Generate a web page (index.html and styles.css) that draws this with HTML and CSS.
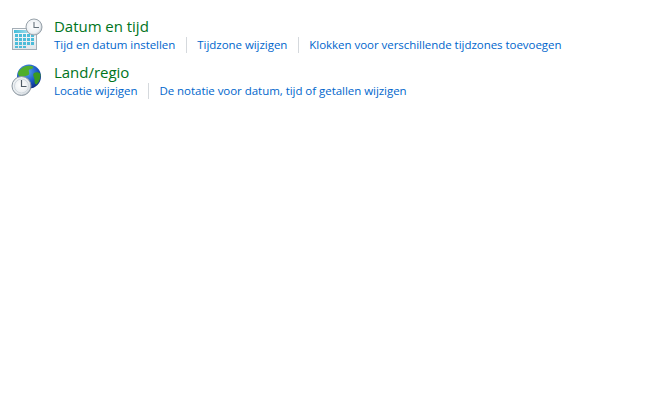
FILE: index.html
```html
<!DOCTYPE html>
<html lang="nl">
<head>
<meta charset="utf-8">
<title>Klok en land/regio</title>
<link rel="stylesheet" href="styles.css">
</head>
<body>
<main class="list">
  <section class="item">
    <svg class="icon" width="32" height="32" viewBox="0 0 32 32" aria-hidden="true">
      <defs>
        <linearGradient id="calBody" x1="0" y1="0" x2="0" y2="1"><stop offset="0" stop-color="#fafcfd"/><stop offset="1" stop-color="#dfe6ea"/></linearGradient>
        <linearGradient id="calHead" x1="0" y1="0" x2="1" y2="0"><stop offset="0" stop-color="#45bedb"/><stop offset="1" stop-color="#c8eaf2"/></linearGradient>
        <radialGradient id="clockFace" cx=".45" cy=".45" r=".6"><stop offset="0" stop-color="#ffffff"/><stop offset=".7" stop-color="#eef1f4"/><stop offset="1" stop-color="#b4bdc5"/></radialGradient>
      </defs>
      <rect x="1.500" y="10.500" width="24" height="21" fill="url(#calBody)" stroke="#a5aeb6"/>
      <rect x="3" y="12" width="21" height="3" fill="url(#calHead)"/>
      <g fill="#4cbcd9">
        <rect x="4" y="16" width="3" height="3"/><rect x="8" y="16" width="3" height="3"/><rect x="12" y="16" width="3" height="3"/><rect x="16" y="16" width="3" height="3"/><rect x="20" y="16" width="3" height="3"/>
        <rect x="4" y="20" width="3" height="3"/><rect x="8" y="20" width="3" height="3"/><rect x="12" y="20" width="3" height="3"/><rect x="16" y="20" width="3" height="3"/><rect x="20" y="20" width="3" height="3"/>
        <rect x="4" y="24" width="3" height="3"/><rect x="8" y="24" width="3" height="3"/><rect x="12" y="24" width="3" height="3"/><rect x="16" y="24" width="3" height="3"/><rect x="20" y="24" width="3" height="3"/>
        <rect x="4" y="28" width="3" height="2"/><rect x="8" y="28" width="3" height="2"/><rect x="12" y="28" width="3" height="2"/>
      </g>
      <circle cx="23" cy="9" r="8" fill="url(#clockFace)" stroke="#98a2aa"/>
      <path d="M23 4V9.500H28" fill="none" stroke="#66727c" stroke-width="1.100"/>
    </svg>
    <div class="body">
      <h2 class="title"><a href="#">Datum en tijd</a></h2>
      <ul class="links">
        <li><a href="#">Tijd en datum instellen</a></li>
        <li><a href="#">Tijdzone wijzigen</a></li>
        <li><a href="#">Klokken voor verschillende tijdzones toevoegen</a></li>
      </ul>
    </div>
  </section>
  <section class="item">
    <svg class="icon" width="32" height="32" viewBox="0 0 32 32" aria-hidden="true">
      <defs>
        <radialGradient id="globe" cx=".4" cy=".3" r=".75"><stop offset="0" stop-color="#5fa8ee"/><stop offset=".6" stop-color="#1a58c4"/><stop offset="1" stop-color="#0c2a80"/></radialGradient>
        <radialGradient id="clockFace2" cx=".45" cy=".45" r=".6"><stop offset="0" stop-color="#ffffff"/><stop offset=".75" stop-color="#e8ecef"/><stop offset="1" stop-color="#a9b3bc"/></radialGradient>
      </defs>
      <circle cx="18" cy="12.500" r="12" fill="url(#globe)"/>
      <path d="M11 4c3-2.500 8-3 11-1.500 1 2-2 3-4 3-1 2 1 3 0 5-2 2-5 1-7 3-2-1-4-2-4-4 0-2 2-4 4-5.500z" fill="#4fae2b"/>
      <path d="M23 9c2-1 5-1 6.500 1 0 4-1 8-4 10.500-2 0-2-3-2-5s-2.500-4.500-.5-6.500z" fill="#3a9a20"/>
      <circle cx="10.500" cy="22" r="9.500" fill="url(#clockFace2)" stroke="#8d98a1"/>
      <circle cx="10.500" cy="22" r="7" fill="none" stroke="#d0d7dd"/>
      <path d="M10.500 16V22.500H15.500" fill="none" stroke="#4f5b66" stroke-width="1.200"/>
    </svg>
    <div class="body">
      <h2 class="title"><a href="#">Land/regio</a></h2>
      <ul class="links">
        <li><a href="#">Locatie wijzigen</a></li>
        <li><a href="#">De notatie voor datum, tijd of getallen wijzigen</a></li>
      </ul>
    </div>
  </section>
</main>
</body>
</html>
```

FILE: styles.css
```css
html, body {
  margin: 0;
  padding: 0;
  background: #ffffff;
}
body {
  font-family: "Open Sans", "Noto Sans", "Liberation Sans", sans-serif;
}
.list {
  display: flex;
  flex-direction: column;
  gap: 4px;
  padding: 13px 0 0 11px;
}
.item {
  display: flex;
  align-items: flex-start;
  gap: 11px;
  height: 42px;
}
.icon {
  flex: none;
  margin-top: 5px;
}
.body {
  display: flex;
  flex-direction: column;
  padding-top: 3px;
}
.title {
  margin: 0;
  font-size: 15px;
  font-weight: 400;
  line-height: 21px;
  letter-spacing: -0.03px;
}
.title a {
  color: #00741c;
  text-decoration: none;
}
.links {
  display: flex;
  margin: 0;
  padding: 0;
  list-style: none;
  font-size: 11.500px;
  line-height: 16px;
  letter-spacing: -0.04px;
}
.links li + li {
  margin-left: 11px;
  padding-left: 10px;
  border-left: 1px solid #d5d9dd;
}
.links a {
  color: #0066cc;
  text-decoration: none;
}
```
